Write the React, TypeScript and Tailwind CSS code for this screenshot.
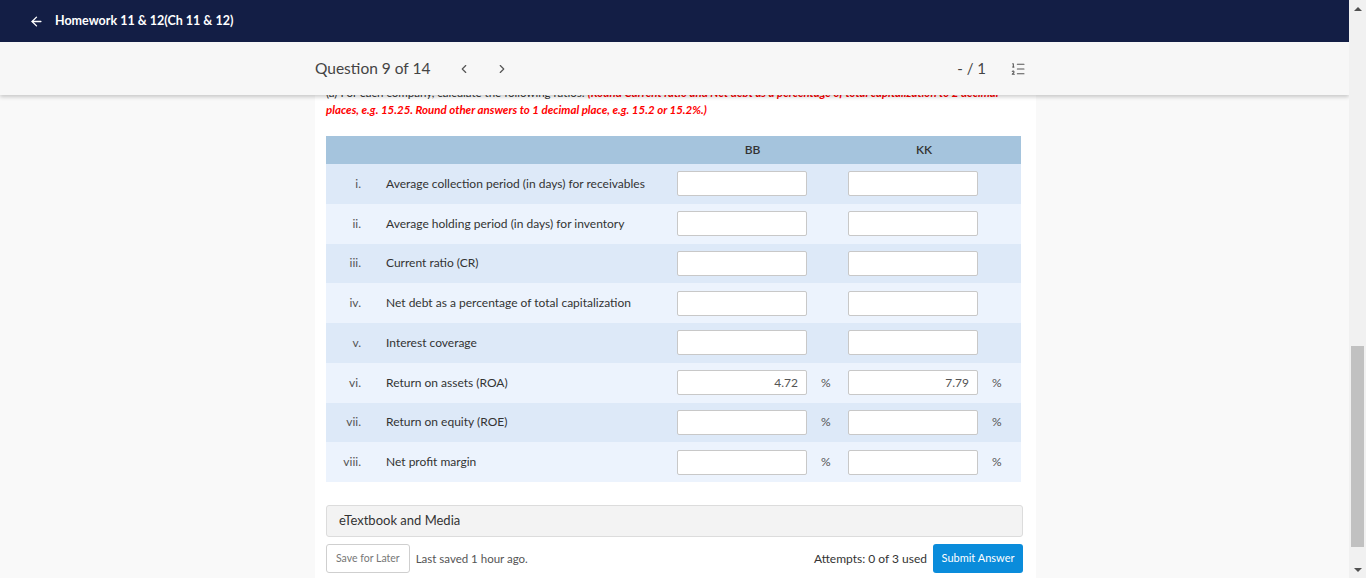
import React from 'react';
import { ArrowLeft, ChevronLeft, ChevronRight, ListOrdered } from 'lucide-react';

interface RatioRow {
  num: string;
  label: string;
  bb: string;
  kk: string;
  pct: boolean;
}

const rows: RatioRow[] = [
  { num: 'i.', label: 'Average collection period (in days) for receivables', bb: '', kk: '', pct: false },
  { num: 'ii.', label: 'Average holding period (in days) for inventory', bb: '', kk: '', pct: false },
  { num: 'iii.', label: 'Current ratio (CR)', bb: '', kk: '', pct: false },
  { num: 'iv.', label: 'Net debt as a percentage of total capitalization', bb: '', kk: '', pct: false },
  { num: 'v.', label: 'Interest coverage', bb: '', kk: '', pct: false },
  { num: 'vi.', label: 'Return on assets (ROA)', bb: '4.72', kk: '7.79', pct: true },
  { num: 'vii.', label: 'Return on equity (ROE)', bb: '', kk: '', pct: true },
  { num: 'viii.', label: 'Net profit margin', bb: '', kk: '', pct: true },
];

const AnswerCell = ({ value, pct }: { value: string; pct: boolean }) => (
  <div className="flex items-center pl-[10px]">
    <div className="w-[130px] h-[25px] bg-white border border-[#c8c8c8] rounded-[2px] flex items-center justify-end pr-[8px] text-[12px] text-[#555]">
      {value}
    </div>
    {pct && <span className="ml-[14px] text-[12px] text-[#555]">%</span>}
  </div>
);

const Scrollbar = () => (
  <div className="w-[17px] h-full bg-[#f1f1f1] flex flex-col items-center">
    <div className="h-[17px] flex items-center justify-center">
      <div className="w-0 h-0 border-l-[4px] border-r-[4px] border-b-[4px] border-l-transparent border-r-transparent border-b-[#505050]" />
    </div>
    <div className="flex-1 w-full relative">
      <div className="absolute left-[2px] right-[2px] top-[329px] h-[201px] bg-[#c1c1c1]" />
    </div>
    <div className="h-[17px] flex items-center justify-center">
      <div className="w-0 h-0 border-l-[4px] border-r-[4px] border-t-[4px] border-l-transparent border-r-transparent border-t-[#505050]" />
    </div>
  </div>
);

export default function App() {
  return (
    <div className="w-[1366px] h-[578px] overflow-hidden flex font-['Lato','Noto_Sans',sans-serif] text-[#333]">
      <div className="w-[1349px] h-full flex flex-col">
        {/* top nav */}
        <div className="h-[42px] bg-[#131e45] flex items-center pl-[29px] shrink-0">
          <ArrowLeft className="w-[15px] h-[15px] text-white" strokeWidth={2.2} />
          <span className="ml-[11px] text-white text-[12.5px] font-bold">Homework 11 &amp; 12(Ch 11 &amp; 12)</span>
        </div>

        {/* scroll area */}
        <div className="relative flex-1 bg-[#f9f9f9] overflow-hidden">
          <div className="absolute top-0 left-0 right-0 h-[53px] bg-[#f7f7f7] shadow-[0_2px_4px_rgba(0,0,0,0.2)] z-10 flex items-center">
            <span className="ml-[315px] text-[15.5px] text-[#444]">Question 9 of 14</span>
            <ChevronLeft className="ml-[27px] w-[14px] h-[14px] text-[#555]" />
            <ChevronRight className="ml-[24px] w-[14px] h-[14px] text-[#555]" />
            <span className="ml-auto text-[15px] text-[#444]">- / 1</span>
            <ListOrdered className="ml-[24px] mr-[323px] w-[16px] h-[16px] text-[#555]" strokeWidth={1.6} />
          </div>

          <div className="ml-[315px] w-[721px] h-full bg-white pt-[42px] pl-[11px] pr-[13px]">
            <p className="text-[11.5px] leading-[17px] text-[#333] whitespace-nowrap">
              (a) For each company, calculate the following ratios:{' '}
              <span className="text-[#f00] font-bold italic">
                (Round Current ratio and Net debt as a percentage of total capitalization to 2 decimal
                <br />
                places, e.g. 15.25. Round other answers to 1 decimal place, e.g. 15.2 or 15.2%.)
              </span>
            </p>

            <div className="mt-[18px] w-[695px]">
              <div className="h-[28px] bg-[#a5c4dd] grid grid-cols-[60px_281px_171px_172px] items-center text-[12px] font-semibold text-[#333]">
                <div />
                <div />
                <div className="text-center">BB</div>
                <div className="text-center">KK</div>
              </div>
              {rows.map((r, i) => (
                <div
                  key={r.num}
                  className={`h-[39.75px] grid grid-cols-[60px_281px_171px_172px] items-center text-[12px] text-[#333] ${
                    i % 2 === 0 ? 'bg-[#dde9f8]' : 'bg-[#ecf3fd]'
                  }`}
                >
                  <div className="text-right pr-[25px] text-[#555]">{r.num}</div>
                  <div>{r.label}</div>
                  <AnswerCell value={r.bb} pct={r.pct} />
                  <AnswerCell value={r.kk} pct={r.pct} />
                </div>
              ))}
            </div>

            <div className="mt-[23px] h-[32px] w-[697px] bg-[#f3f3f3] border border-[#dcdcdc] rounded-[3px] flex items-center pl-[12px] text-[13px] text-[#333]">
              eTextbook and Media
            </div>

            <div className="mt-[7px] w-[697px] flex items-center">
              <button className="h-[29px] px-[9px] border border-[#cfcfcf] rounded-[3px] bg-white text-[10.5px] text-[#777]">
                Save for Later
              </button>
              <span className="ml-[6px] text-[11.5px] text-[#555]">Last saved 1 hour ago.</span>
              <span className="ml-auto text-[12px] text-[#333]">Attempts: 0 of 3 used</span>
              <button className="ml-[6px] h-[29px] w-[90px] rounded-[3px] bg-[#0a8cdb] text-[11px] text-white">
                Submit Answer
              </button>
            </div>
            <p className="mt-[3px] text-[12px] text-[#555]">
              Save and work will be automatically submitted on the due date. Auto-submit
            </p>
          </div>
        </div>
      </div>
      <Scrollbar />
    </div>
  );
}
